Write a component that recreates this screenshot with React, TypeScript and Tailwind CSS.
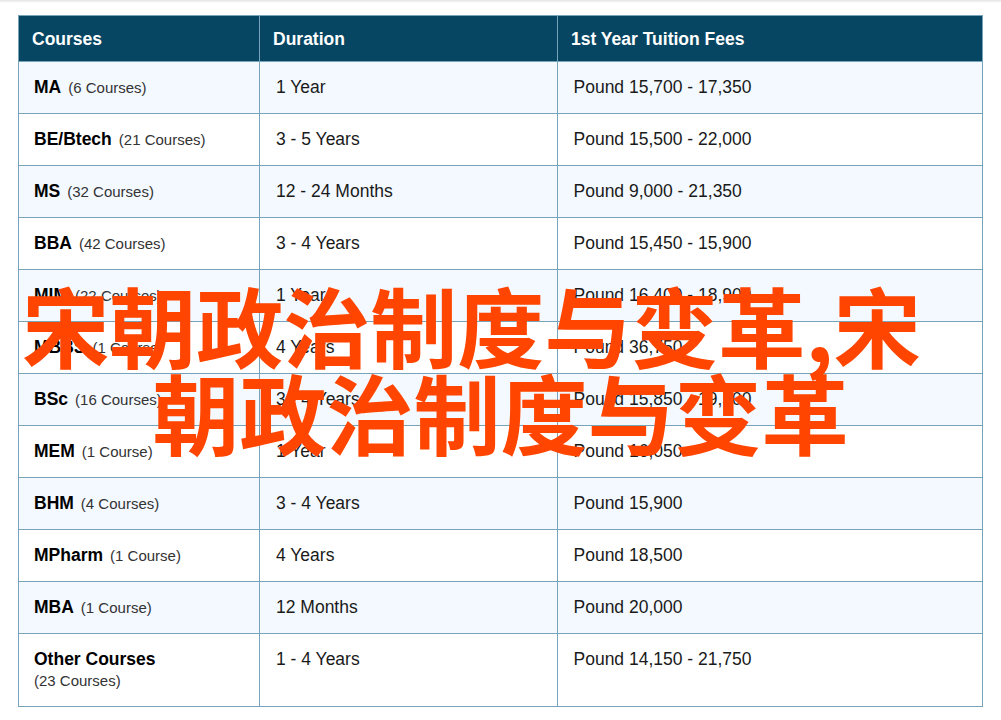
const rows = [
  { name: "MA", count: "(6 Courses)", duration: "1 Year", fees: "Pound 15,700 - 17,350" },
  { name: "BE/Btech", count: "(21 Courses)", duration: "3 - 5 Years", fees: "Pound 15,500 - 22,000" },
  { name: "MS", count: "(32 Courses)", duration: "12 - 24 Months", fees: "Pound 9,000 - 21,350" },
  { name: "BBA", count: "(42 Courses)", duration: "3 - 4 Years", fees: "Pound 15,450 - 15,900" },
  { name: "MIM", count: "(22 Courses)", duration: "1 Year", fees: "Pound 16,400 - 18,900" },
  { name: "MBBS", count: "(1 Course)", duration: "4 Years", fees: "Pound 36,750" },
  { name: "BSc", count: "(16 Courses)", duration: "3 - 4 Years", fees: "Pound 15,850 - 19,500" },
  { name: "MEM", count: "(1 Course)", duration: "1 Year", fees: "Pound 16,050" },
  { name: "BHM", count: "(4 Courses)", duration: "3 - 4 Years", fees: "Pound 15,900" },
  { name: "MPharm", count: "(1 Course)", duration: "4 Years", fees: "Pound 18,500" },
  { name: "MBA", count: "(1 Course)", duration: "12 Months", fees: "Pound 20,000" },
];

export default function App() {
  return (
    <div className="relative h-[720px] w-[1001px] overflow-hidden bg-white pl-[18px] pt-[15px] font-['Liberation_Sans',sans-serif]">
      <div className="absolute inset-x-0 top-0 h-[3px] bg-gradient-to-b from-[#e4e4e4] to-white" />

      <div className="w-[965px] border border-[#78a4bb]">
        <div className="grid h-[45px] grid-cols-[240px_298px_1fr] bg-[#064663] text-[17.5px] font-bold text-white">
          <div className="pl-[13px] pt-[10px]">Courses</div>
          <div className="border-l border-[#78a4bb] pl-[13px] pt-[10px]">Duration</div>
          <div className="border-l border-[#78a4bb] pl-[13px] pt-[10px]">1st Year Tuition Fees</div>
        </div>

        {rows.map((row, i) => (
          <div
            key={row.name}
            className={`grid h-[52px] grid-cols-[240px_298px_1fr] border-t border-[#78a4bb] text-[17.5px] text-[#1a1a1a] ${i % 2 === 0 ? "bg-[#f3f9ff]" : "bg-white"}`}
          >
            <div className="pl-[15px] pt-[12px]">
              <span className="font-bold text-black">{row.name}</span>
              <span className="ml-[7px] text-[15px] text-[#333]">{row.count}</span>
            </div>
            <div className="border-l border-[#78a4bb] pl-[16px] pt-[12px]">{row.duration}</div>
            <div className="border-l border-[#78a4bb] pl-[15.5px] pt-[12px]">{row.fees}</div>
          </div>
        ))}

        <div className="grid h-[73px] grid-cols-[240px_298px_1fr] border-t border-[#78a4bb] text-[17.5px] text-[#1a1a1a]">
          <div className="pl-[15px] pt-[12px]">
            <div className="font-bold text-black">Other Courses</div>
            <div className="-mt-[2px] text-[15px] text-[#333]">(23 Courses)</div>
          </div>
          <div className="border-l border-[#78a4bb] pl-[16px] pt-[12px]">1 - 4 Years</div>
          <div className="border-l border-[#78a4bb] pl-[15.5px] pt-[12px]">Pound 14,150 - 21,750</div>
        </div>
      </div>

      {/* headline sits over the table */}
      <div className="absolute inset-x-0 top-[281px] text-center font-['Noto_Sans_CJK_SC',sans-serif] text-[87px] font-bold leading-[87px] text-[#ff4500]">
        <div className="pr-[58px]">宋朝政治制度与变革,宋</div>
        <div>朝政治制度与变革</div>
      </div>
    </div>
  );
}
